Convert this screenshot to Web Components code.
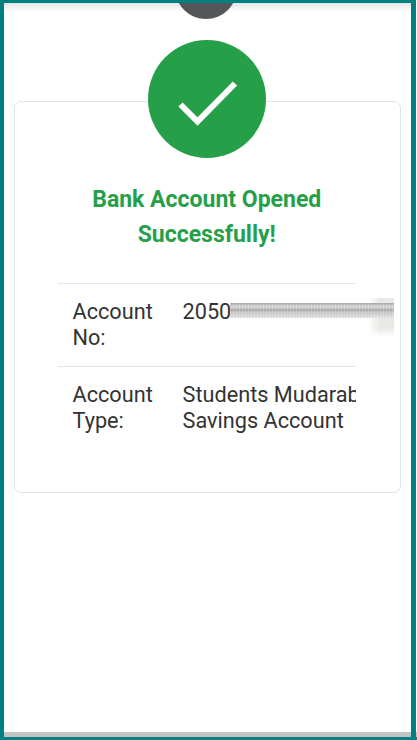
<!DOCTYPE html>
<html lang="en">
<head>
<meta charset="utf-8">
<title>Account Opened</title>
<style>
    html, body { margin: 0; height: 740px; background: #fff; overflow: hidden; }
    body { font-family: Roboto, "Liberation Sans", sans-serif; }
</style>
</head>
<body>
<success-screen>
    <result-card title-text="Bank Account Opened Successfully!">
        <detail-row label="Account No:" redacted>2050</detail-row>
        <detail-row label="Account Type:">Students Mudaraba Savings Account</detail-row>
    </result-card>
</success-screen>

<script>
class CustomElement extends HTMLElement {
    render() {
        return '';
    }

    connectedCallback() {
        const shadow = this.attachShadow({mode: 'open'});
        const template = document.createElement('template');
        template.innerHTML = this.render();
        shadow.appendChild(template.content.cloneNode(true));
    }
}

class SuccessScreenElement extends CustomElement {
    render() {
        return `<style>
            :host {
                display: flex;
                flex-direction: column;
                width: 417px;
                height: 740px;
                box-sizing: border-box;
                padding-bottom: 3px;
                background:
                    linear-gradient(#008080, #008080) 0 100% / 100% 3px no-repeat,
                    linear-gradient(#c3c3c3, #c3c3c3) 100% 732px / 1px 5px no-repeat,
                    #fff;
            }
            .frame {
                position: relative;
                flex: 1;
                display: flex;
                flex-direction: column;
                width: 416px;
                box-sizing: border-box;
                border: solid #008080;
                border-width: 3px 5px 0 4px;
                background: #fff;
                overflow: hidden;
            }
            .shade {
                height: 9px;
                background: linear-gradient(#e4e6e6, #fff);
            }
            .notch {
                position: absolute;
                top: -46px;
                left: 171px;
                width: 62px;
                height: 62px;
                border-radius: 50%;
                background: #55565a;
            }
            .content {
                flex: 1;
                padding: 89px 6px 0 9.5px;
            }
            .band {
                height: 5px;
                background: #c3c3c3;
            }
        </style>
        <div class="frame">
            <div class="shade"></div>
            <div class="notch"></div>
            <div class="content"><slot></slot></div>
            <div class="band"></div>
        </div>`;
    }
}
customElements.define('success-screen', SuccessScreenElement);

class ResultCardElement extends CustomElement {
    render() {
        return `<style>
            :host {
                position: relative;
                display: block;
                box-sizing: border-box;
                width: 387px;
                height: 392px;
                padding: 0 43.5px 0 43px;
                border: 1.5px solid #e2e2e2;
                border-radius: 7px;
                background: #fff;
            }
            .badge {
                position: absolute;
                top: -62px;
                left: 133px;
                width: 118px;
                height: 118px;
                border-radius: 50%;
                background: #25a049;
            }
            .badge svg {
                display: block;
            }
            h1 {
                margin: 80px -10px 31px;
                color: #25a049;
                font-size: 23px;
                font-weight: 700;
                line-height: 35px;
                text-align: center;
            }
        </style>
        <div class="badge">
            <svg width="118" height="118" viewBox="0 0 118 118">
                <path d="M32.5 64.5 L49.5 81.5 L87 43.5" fill="none" stroke="#fff" stroke-width="6"/>
            </svg>
        </div>
        <h1>${this.getAttribute('title-text')}</h1>
        <slot></slot>`;
    }
}
customElements.define('result-card', ResultCardElement);

class DetailRowElement extends CustomElement {
    render() {
        const redaction = this.hasAttribute('redacted') ? `
            <div class="patch"></div>
            <div class="smear"></div>` : '';
        return `<style>
            :host {
                position: relative;
                display: grid;
                grid-template-columns: 110px 1fr;
                box-sizing: border-box;
                height: 83px;
                padding: 15px 0 0 15px;
                border-top: 1.5px solid #e6e6e6;
                color: #333;
                font-size: 21.7px;
                line-height: 26px;
            }
            .value {
                overflow: hidden;
            }
            .wrap {
                display: block;
                width: 190px;
            }
            .smear {
                position: absolute;
                top: 19px;
                left: 172px;
                width: 164px;
                height: 15px;
                background:
                    repeating-linear-gradient(90deg, #fff3 0 1px, #0000 1px 3px),
                    linear-gradient(#a8a8a8 0 1px, #c8c8c8 2px, #d4d4d4 5px, #b0b0b0 6px, #a8a8a8 7px, #c4c4c4 9px, #d6d6d6 13px, #e4e4e4);
            }
            .patch {
                position: absolute;
                top: 14px;
                left: 310px;
                width: 26px;
                height: 39px;
                background: linear-gradient(90deg, #fff0, #e8e8e4 45%);
                mask-image: linear-gradient(#000, #000 75%, #0000);
            }
        </style>
        <div class="label">${this.getAttribute('label')}</div>
        <div class="value"><span class="wrap"><slot></slot></span></div>
        ${redaction}`;
    }
}
customElements.define('detail-row', DetailRowElement);
</script>
</body>
</html>
